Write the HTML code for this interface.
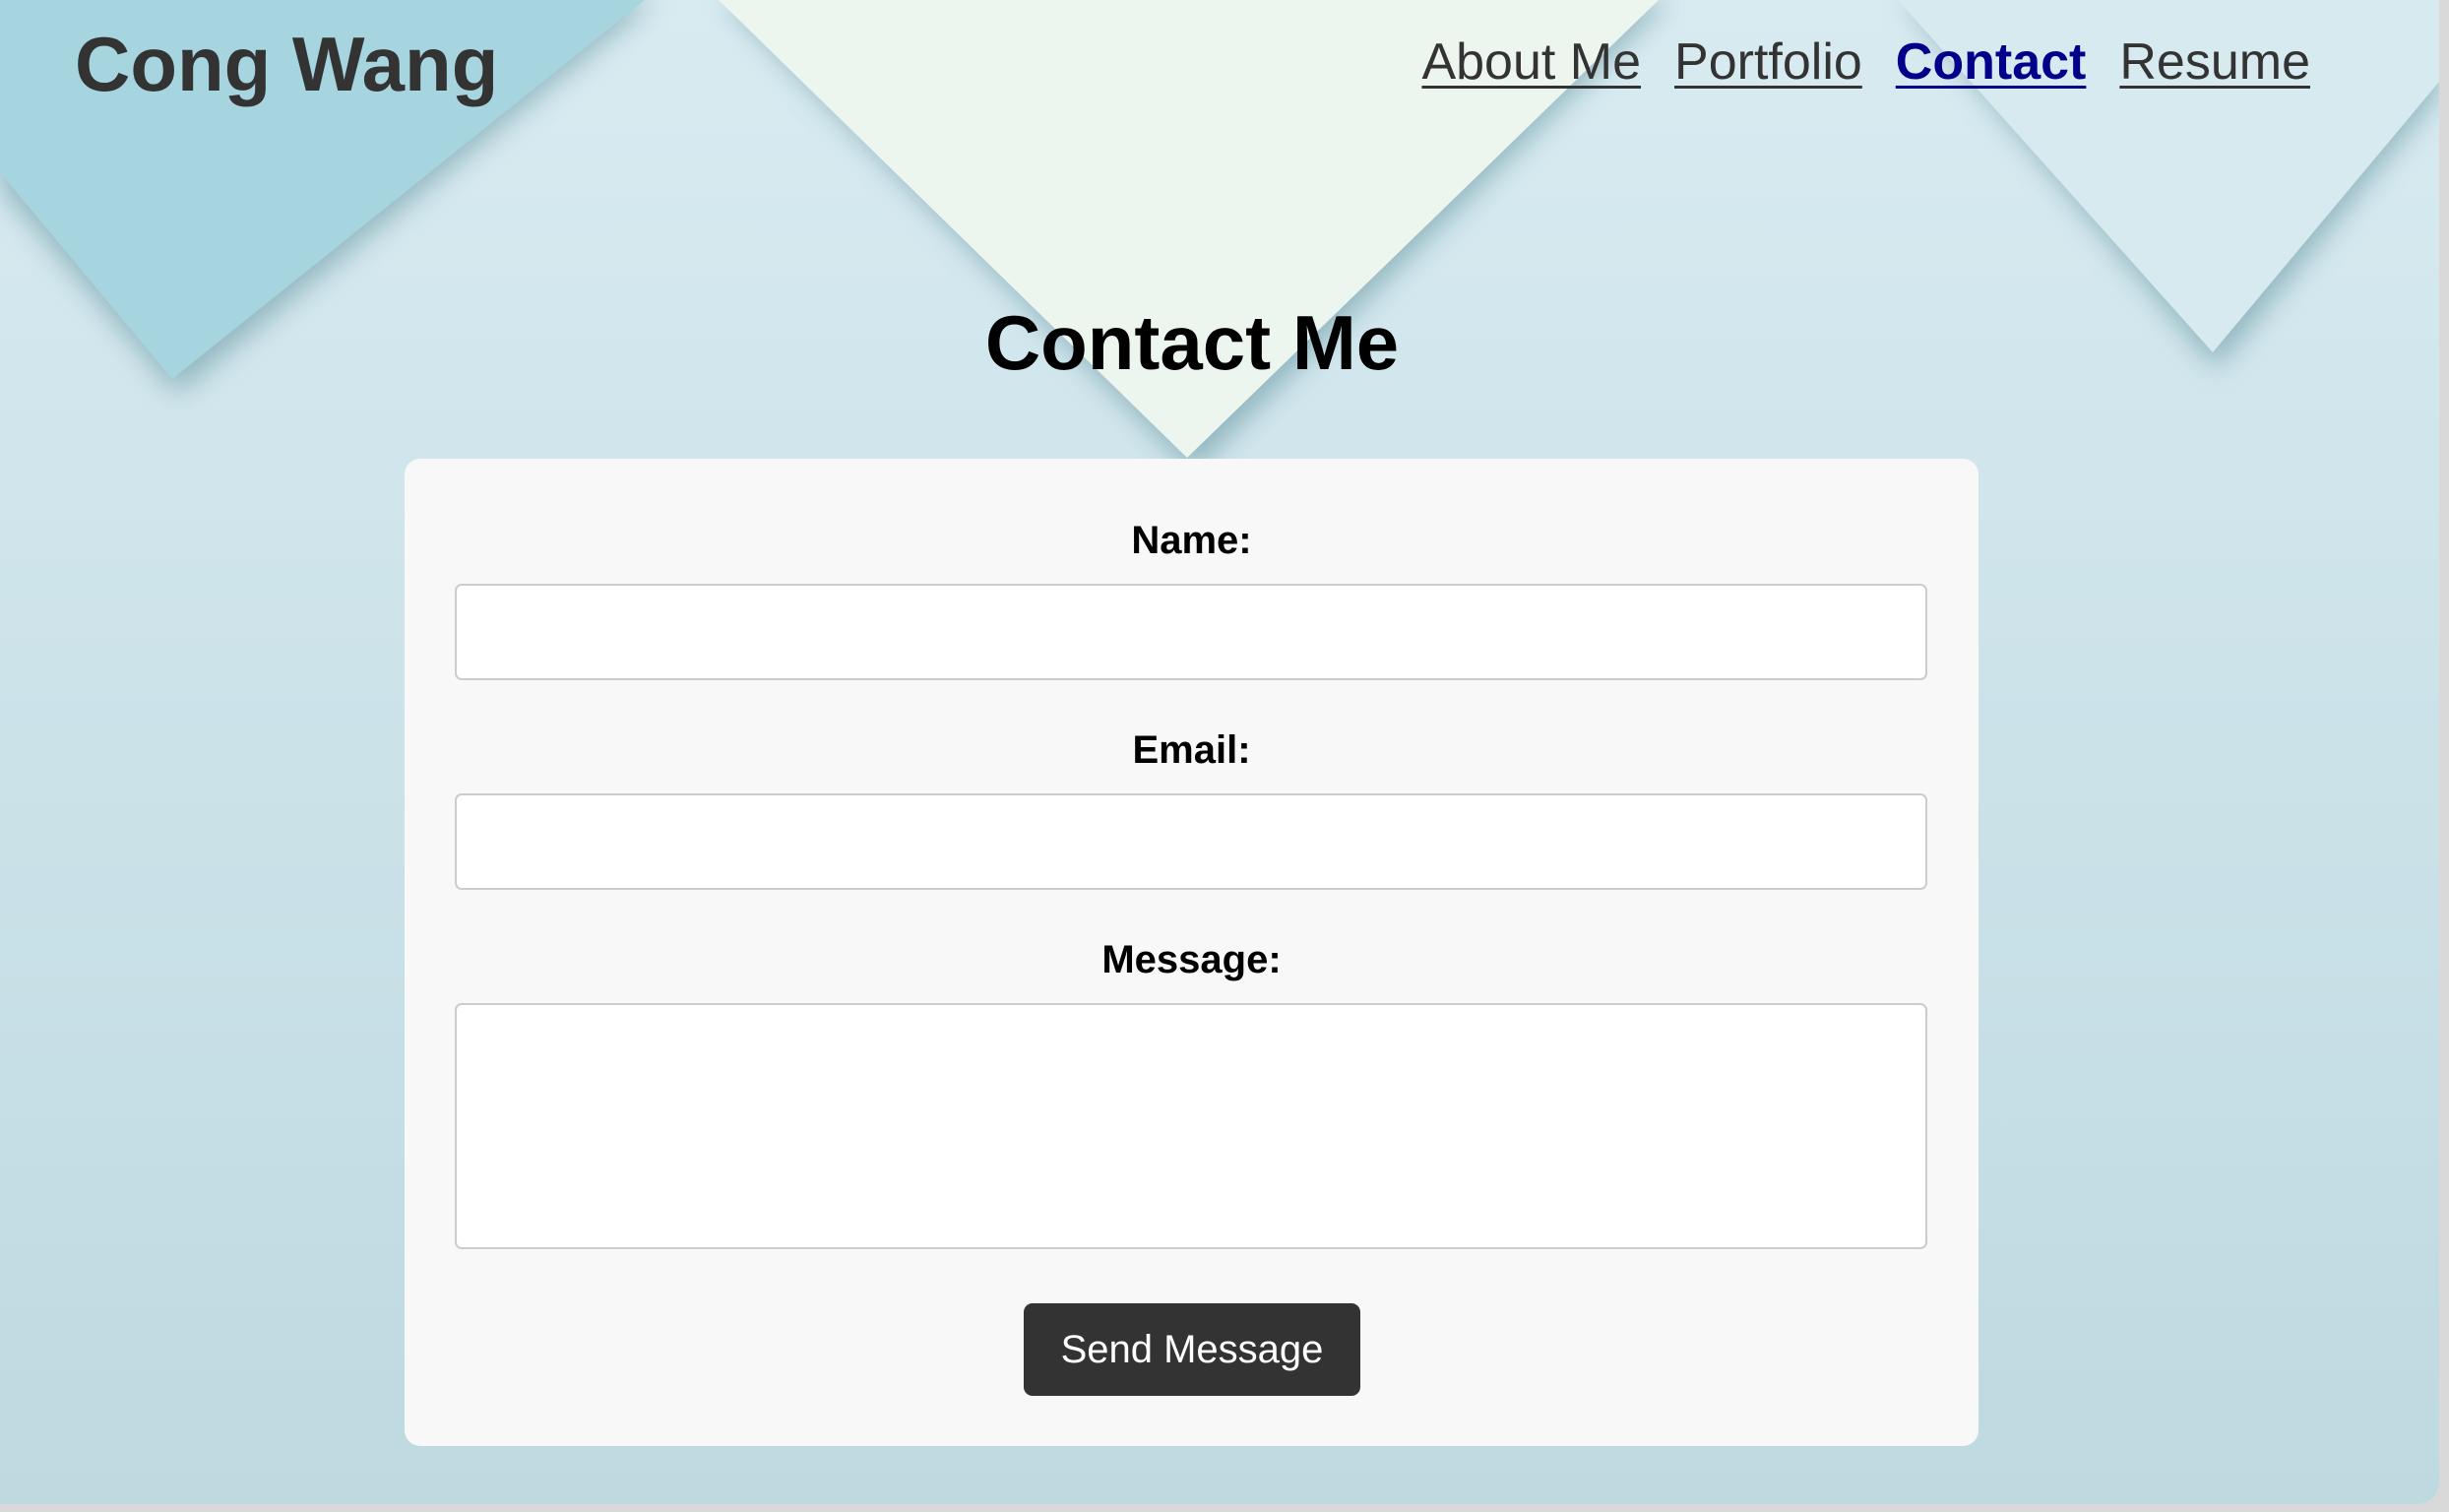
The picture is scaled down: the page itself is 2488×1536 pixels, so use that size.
<!DOCTYPE html>
<html><head><meta charset="utf-8"><style>
html,body{margin:0;padding:0;width:2488px;height:1536px;overflow:hidden;background:#d9d9d9;font-family:"Liberation Sans",Arial,sans-serif}
#win{position:absolute;left:0;top:0;width:2478px;height:1528px;border-bottom-right-radius:22px;overflow:hidden;background:#d3e7ee}
#bg{position:absolute;left:0;top:0}
h1{position:absolute;left:76px;top:20px;margin:0;font-size:78px;font-weight:bold;color:#333}
nav{position:absolute;right:131px;top:33px;font-size:52px}
nav a{color:#333;text-decoration:underline;margin-left:34px;text-decoration-thickness:3px;text-underline-offset:7px}
nav a.c{color:#00008b;font-weight:bold}
h2{position:absolute;left:0;width:2422px;text-align:center;top:303px;margin:0;font-size:78px;font-weight:bold;color:#000}
#card{position:absolute;left:411px;top:466px;width:1599px;height:1003px;background:#f8f8f8;border-radius:16px}
.lbl{position:absolute;left:0;width:1599px;text-align:center;font-size:40px;font-weight:bold;color:#000}
.in{position:absolute;left:51px;width:1496px;background:#fff;border:2px solid #ccc;border-radius:7px;box-sizing:border-box}
#btn{position:absolute;left:629px;top:858px;width:342px;height:94px;background:#333;border-radius:9px;color:#fff;font-size:40px;text-align:center;line-height:94px}
</style></head><body>
<div id="win">
<svg id="bg" width="2478" height="1528" viewBox="0 0 2478 1528">
<defs>
<filter id="sh" x="-20%" y="-20%" width="140%" height="140%"><feGaussianBlur stdDeviation="14"/></filter>
<linearGradient id="bgg" x1="0" y1="0" x2="0" y2="1"><stop offset="0" stop-color="#d8ebf1"/><stop offset="1" stop-color="#bfd9e1"/></linearGradient>
</defs>
<rect width="2478" height="1528" fill="url(#bgg)"/>
<g filter="url(#sh)" fill="#5d8e9a" opacity="0.55">
<polygon points="0,190 0,0 665,0 180,400"/>
<polygon points="735,0 1695,0 1212,480"/>
<polygon points="1935,0 2478,0 2478,95 2252,375"/>
</g>
<polygon points="0,175 0,0 655,0 175,385" fill="#a6d5e0"/>
<polygon points="730,0 1685,0 1206,465" fill="#ecf6ee"/>
<polygon points="1928,0 2478,0 2478,83 2248,358" fill="#d6eaf0"/>
</svg>
<h1>Cong Wang</h1>
<nav><a>About Me</a><a>Portfolio</a><a class="c">Contact</a><a>Resume</a></nav>
<h2>Contact Me</h2>
<div id="card">
<div class="lbl" style="top:61px">Name:</div>
<div class="in" style="top:127px;height:98px"></div>
<div class="lbl" style="top:274px">Email:</div>
<div class="in" style="top:340px;height:98px"></div>
<div class="lbl" style="top:487px">Message:</div>
<div class="in" style="top:553px;height:250px"></div>
<div id="btn">Send Message</div>
</div>
</div>
</body></html>
